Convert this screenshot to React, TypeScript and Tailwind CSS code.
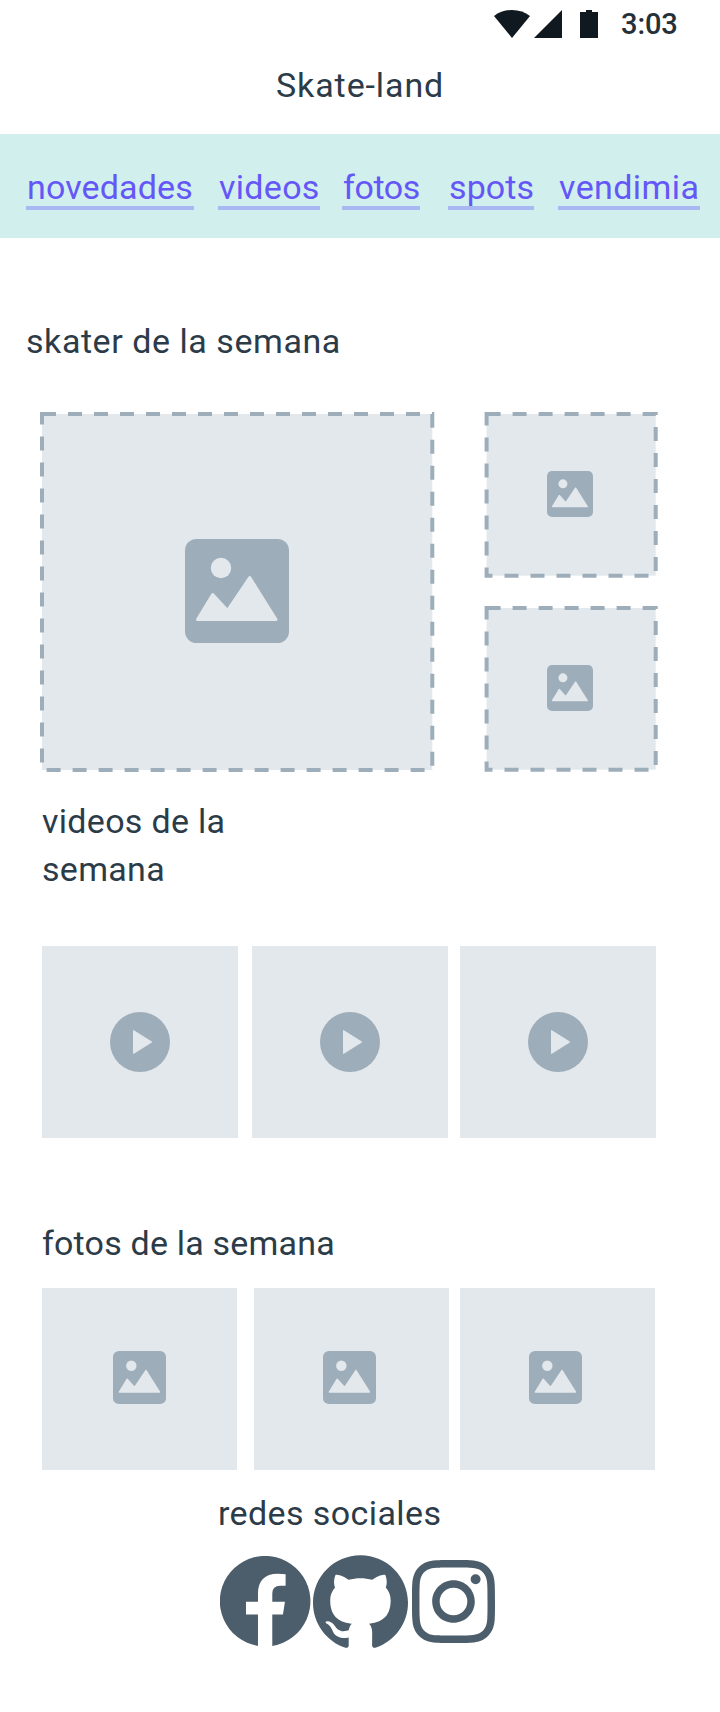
import { SiGithub, SiInstagram } from "react-icons/si";

function ImageIcon({ className }: { className: string }) {
  return (
    <svg viewBox="0 0 104 104" className={`shrink-0 ${className}`}>
      <rect width="104" height="104" rx="11.5" fill="#9eadba" />
      <circle cx="36" cy="29" r="10.2" fill="#e2e8ec" />
      <path
        d="M12.5 80.5 27.7 55.5 42.5 71.5 64.7 38.5 91 80.5Z"
        fill="#e2e8ec"
        stroke="#e2e8ec"
        strokeWidth="3"
        strokeLinejoin="round"
      />
    </svg>
  );
}

function PlayIcon() {
  return (
    <svg viewBox="0 0 60 60" className="size-[60px]">
      <circle cx="30" cy="30" r="30" fill="#9eadba" />
      <path d="M23.5 18.5 41.8 30 23.5 41.5Z" fill="#e2e8ec" stroke="#e2e8ec" strokeLinejoin="round" />
    </svg>
  );
}

function DashedFrame({ width, height, x, y }: { width: number; height: number; x: number; y: number }) {
  return (
    <svg width="100%" height="100%" className="absolute inset-0 overflow-visible">
      <rect
        x={x}
        y={y}
        width={width}
        height={height}
        fill="#e2e8ec"
        stroke="#9eadba"
        strokeWidth="4"
        strokeDasharray="14 12"
      />
    </svg>
  );
}

function Facebook() {
  return (
    <svg viewBox="60 228 272 272" className="h-[90.6px] w-[90.6px]" fill="#4c5d6b">
      <path d="M174 498A136 136 0 1 1 217 498V404H249L255 365H217V340Q217 317 241 317H257V283Q247 281 233 281C194 281 174 303 174 341V365H138V404H174Z" />
    </svg>
  );
}

function StatusBar() {
  return (
    <div className="flex h-[61px] items-start pl-[494px]">
      <svg viewBox="0 0 104 28" className="mt-[10px] h-[28px] w-[104px]" fill="#101820">
        <path d="M0 6Q7.500 0 18 0T36 6L18 28Z" />
        <path d="M40 28 68 0V28Z" />
        <path d="M86 2H92V0H98V2H104V28H86Z" />
      </svg>
      <span className="ml-[23px] mt-[4px] text-[29px] font-medium leading-[40px] tracking-[-0.1px] text-[#263038]">3:03</span>
    </div>
  );
}

const text = "text-[34px] leading-[48px] whitespace-nowrap text-[#2c3b48]";
const link = "block h-[47px] border-b-4 border-[#a9b7f2] pl-px text-[34px] leading-[48px] whitespace-nowrap text-[#6557f7]";

export default function App() {
  return (
    <div className="h-[1712px] w-[720px] overflow-hidden bg-white font-['Roboto',sans-serif]">
      <StatusBar />
      <h1 className={`${text} h-[73px] pl-[276px] tracking-[0.9px]`}>Skate-land</h1>

      <nav className="flex h-[104px] bg-[#d1efed] pl-[26px] pt-[29px]">
        <a className={`${link} w-[168px] tracking-[0.15px]`}>novedades</a>
        <a className={`${link} ml-[24px] w-[102px] tracking-[0.3px]`}>videos</a>
        <a className={`${link} ml-[22px] w-[78px] tracking-[-0.4px]`}>fotos</a>
        <a className={`${link} ml-[28px] w-[86px] tracking-[0.1px]`}>spots</a>
        <a className={`${link} ml-[24px] w-[142px] tracking-[0.4px]`}>vendimia</a>
      </nav>

      <h2 className={`${text} mt-[79px] pl-[26px] tracking-[0.55px]`}>skater de la semana</h2>

      <section className="mt-[49px] flex h-[356px] pl-[42px]">
        <div className="relative flex w-[390px] items-center justify-center">
          <DashedFrame x={0} y={0} width={390.3} height={356} />
          <ImageIcon className="relative -top-px size-[104px]" />
        </div>
        <div className="ml-[54px] flex flex-col gap-[32px]">
          <div className="relative flex h-[162px] w-[170px] items-center justify-center">
            <DashedFrame x={0.6} y={0} width={169.1} height={161.7} />
            <ImageIcon className="relative -left-px -top-px size-[46px]" />
          </div>
          <div className="relative flex h-[162px] w-[170px] items-center justify-center">
            <DashedFrame x={0.6} y={0} width={169.1} height={161.7} />
            <ImageIcon className="relative -left-px -top-px size-[46px]" />
          </div>
        </div>
      </section>

      <h2 className={`${text} mt-[27px] pl-[42px] tracking-[0.3px]`}>
        videos de la
        <br />
        semana
      </h2>

      <section className="mt-[53px] flex h-[192px] pl-[42px]">
        <div className="flex w-[196px] items-center justify-center bg-[#e2e8ec]">
          <PlayIcon />
        </div>
        <div className="ml-[14px] flex w-[196px] items-center justify-center bg-[#e2e8ec]">
          <PlayIcon />
        </div>
        <div className="ml-[12px] flex w-[196px] items-center justify-center bg-[#e2e8ec]">
          <PlayIcon />
        </div>
      </section>

      <h2 className={`${text} mt-[81px] pl-[42px] tracking-[0.2px]`}>fotos de la semana</h2>

      <section className="mt-[21px] flex h-[182px] pl-[42px]">
        <div className="flex w-[195px] items-center justify-center bg-[#e2e8ec] pb-[3px]">
          <ImageIcon className="size-[53px]" />
        </div>
        <div className="ml-[17px] flex w-[195px] items-center justify-center bg-[#e2e8ec] pb-[3px] pr-[4px]">
          <ImageIcon className="size-[53px]" />
        </div>
        <div className="ml-[11px] flex w-[195px] items-center justify-center bg-[#e2e8ec] pb-[3px] pr-[4px]">
          <ImageIcon className="size-[53px]" />
        </div>
      </section>

      <h2 className={`${text} mt-[19px] pl-[218px] tracking-[0.4px]`}>redes sociales</h2>
      <div className="mt-[18px] flex pl-[220px] text-[#4c5d6b]">
        <div className="mt-px">
          <Facebook />
        </div>
        <SiGithub className="-mt-px ml-[2.4px] size-[95px]" />
        <SiInstagram className="ml-[4px] mt-[5px] size-[83px]" />
      </div>
    </div>
  );
}
